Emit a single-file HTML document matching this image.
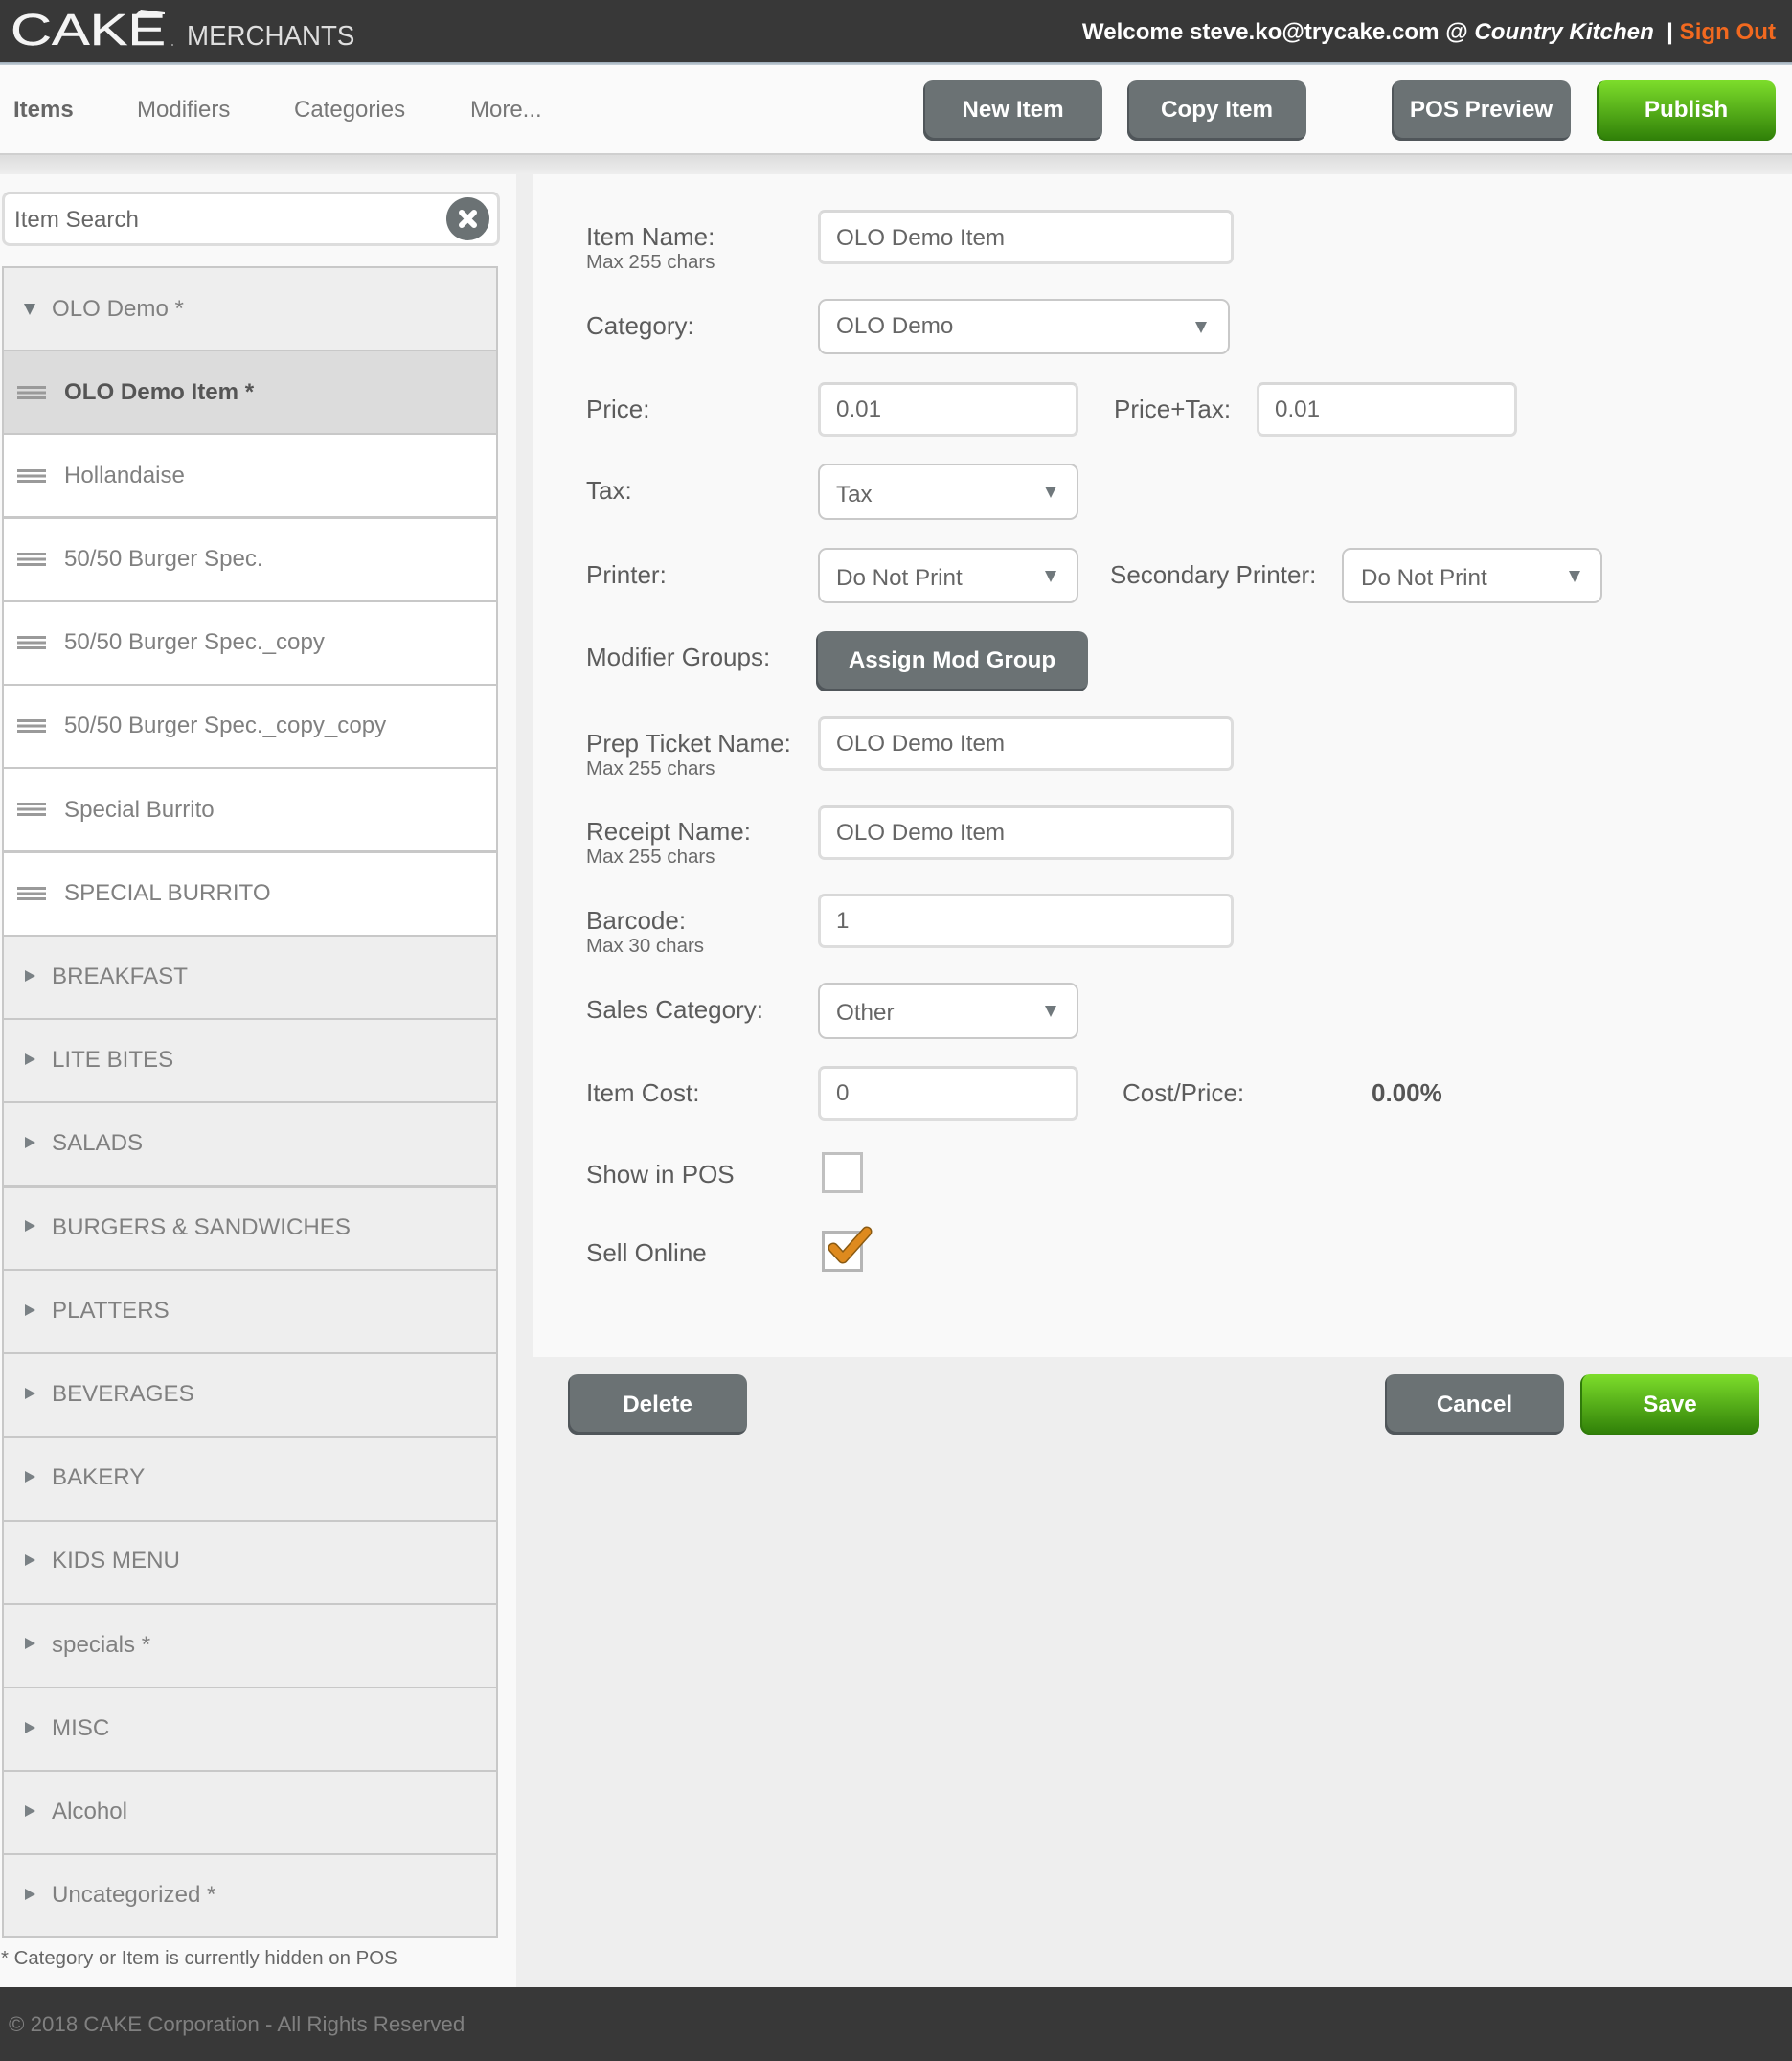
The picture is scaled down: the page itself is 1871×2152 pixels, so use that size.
<!DOCTYPE html>
<html><head><meta charset="utf-8"><title>CAKE Merchants</title>
<style>
html,body{margin:0;padding:0}
body{width:1871px;height:2152px;position:relative;overflow:hidden;background:#eee;font-family:"Liberation Sans",sans-serif;color:#666}
div,span.a{position:absolute;box-sizing:border-box}
.t{white-space:nowrap;height:32px;line-height:32px;font-size:24px}
.l{font-size:26px;color:#5c5c5c;left:612px}
.s{font-size:20.5px;color:#6a6a6a;left:612px;height:24px;line-height:24px;margin-top:1px}
.i{background:#fff;border:3px solid #ddd;border-top-color:#d8d8d8;border-radius:7px}
.sel{background:#fff;border:2px solid #c9c9c9;border-radius:9px}
.v{font-size:24.2px;color:#666;margin-top:1px}
.b{border-radius:10px;color:#fff;font-weight:bold;font-size:24.2px;text-align:center;background:#6b7274;box-shadow:inset 2px -3px 0 #50565a;line-height:62px;height:63px;width:187px}
.g{background:linear-gradient(#7ddd2b,#2f7f08);box-shadow:inset 2px -1px 0 #2f7a0a}
.r{left:2px;width:518px;height:89px;border:2px solid #c8c8c8;border-top-width:2px}
.c{background:#eee}.w{background:#fff}
.n{color:#808080;font-size:24.1px;margin-top:1px}
.tr{width:0;height:0;border-top:6.5px solid transparent;border-bottom:6.5px solid transparent;border-left:11px solid #7a8185;left:26px}
.td{width:0;height:0;border-left:6.5px solid transparent;border-right:6.5px solid transparent;border-top:12px solid #70787c;margin-top:1px}
.h{left:18px;width:30px;height:14px;background:repeating-linear-gradient(#9a9a9a 0,#9a9a9a 3px,transparent 3px,transparent 5.5px)}
</style></head><body>

<!-- header -->
<div style="left:0;top:0;width:1871px;height:65px;background:#383838"></div>
<div style="left:0;top:65px;width:1871px;height:3px;background:linear-gradient(#9aa9b6,#c8d2da)"></div>
<div class="t" style="left:11px;top:4px;height:54px;line-height:54px;font-size:46.5px;color:#f4f4f4;-webkit-text-stroke:.4px #f4f4f4;transform-origin:left center;transform:scaleX(1.28)">CAKE</div>
<svg style="position:absolute;left:0;top:0" width="200" height="60"><path d="M142 15L147 10L172 13V15Z" fill="#f2f2f2"/><rect x="179" y="46" width="2" height="2" fill="#8a8a8a"/></svg>
<div class="t" style="left:195px;top:21px;height:34px;line-height:34px;font-size:29px;color:#dedede;transform-origin:left center;transform:scaleX(.955)">MERCHANTS</div>
<div class="t" style="right:17px;top:18px;font-size:24.1px;font-weight:bold;color:#fff">Welcome steve.ko@trycake.com @ <i>Country Kitchen</i> &nbsp;| <span style="color:#f2691f">Sign Out</span></div>

<!-- nav -->
<div style="left:0;top:68px;width:1871px;height:94px;background:#fafafa;border-bottom:2px solid #cfcfcf"></div>
<div style="left:0;top:162px;width:1871px;height:20px;background:linear-gradient(#dcdcdc,#eee)"></div>
<div class="t" style="left:14px;top:99px;font-weight:bold;color:#666">Items</div>
<div class="t" style="left:143px;top:99px;color:#777">Modifiers</div>
<div class="t" style="left:307px;top:99px;color:#777">Categories</div>
<div class="t" style="left:491px;top:99px;color:#777">More...</div>
<div class="b" style="left:964px;top:84px">New Item</div>
<div class="b" style="left:1177px;top:84px">Copy Item</div>
<div class="b" style="left:1453px;top:84px">POS Preview</div>
<div class="b g" style="left:1667px;top:84px">Publish</div>

<!-- left panel -->
<div style="left:0;top:182px;width:539px;height:1893px;background:#f9f9f9"></div>
<div class="i" style="left:2px;top:200px;width:520px;height:57px;border-radius:8px"></div>
<div class="t" style="left:15px;top:214px;font-size:24.1px;color:#666">Item Search</div>
<div style="left:466px;top:206px;width:45px;height:45px;border-radius:50%;background:#6b7274"></div>
<svg style="position:absolute;left:466px;top:206px" width="45" height="45"><path d="M16 16L29 29M29 16L16 29" stroke="#fff" stroke-width="6" stroke-linecap="round"/></svg>

<div class="r c" style="top:278px"></div>
<div class="td" style="left:25px;top:316px"></div>
<div class="t n" style="left:54px;top:306px">OLO Demo *</div>
<div class="r" style="top:365px;background:#dcdcdc"></div>
<div class="h" style="top:403px"></div>
<div class="t" style="left:67px;top:394px;font-weight:bold;color:#555;font-size:24.1px">OLO Demo Item *</div>
<div class="r w" style="top:452px"></div><div class="h" style="top:490px"></div>
<div class="t n" style="left:67px;top:480px">Hollandaise</div>
<div class="r w" style="top:540px"></div><div class="h" style="top:577px"></div>
<div class="t n" style="left:67px;top:567px">50/50 Burger Spec.</div>
<div class="r w" style="top:627px"></div><div class="h" style="top:664px"></div>
<div class="t n" style="left:67px;top:654px">50/50 Burger Spec._copy</div>
<div class="r w" style="top:714px"></div><div class="h" style="top:751px"></div>
<div class="t n" style="left:67px;top:741px">50/50 Burger Spec._copy_copy</div>
<div class="r w" style="top:801px"></div><div class="h" style="top:838px"></div>
<div class="t n" style="left:67px;top:829px">Special Burrito</div>
<div class="r w" style="top:889px"></div><div class="h" style="top:926px"></div>
<div class="t n" style="left:67px;top:916px">SPECIAL BURRITO</div>
<div class="r c" style="top:976px"></div><div class="tr" style="top:1013px"></div>
<div class="t n" style="left:54px;top:1003px">BREAKFAST</div>
<div class="r c" style="top:1063px"></div><div class="tr" style="top:1100px"></div>
<div class="t n" style="left:54px;top:1090px">LITE BITES</div>
<div class="r c" style="top:1150px"></div><div class="tr" style="top:1187px"></div>
<div class="t n" style="left:54px;top:1177px">SALADS</div>
<div class="r c" style="top:1238px"></div><div class="tr" style="top:1274px"></div>
<div class="t n" style="left:54px;top:1265px">BURGERS &amp; SANDWICHES</div>
<div class="r c" style="top:1325px"></div><div class="tr" style="top:1362px"></div>
<div class="t n" style="left:54px;top:1352px">PLATTERS</div>
<div class="r c" style="top:1412px"></div><div class="tr" style="top:1449px"></div>
<div class="t n" style="left:54px;top:1439px">BEVERAGES</div>
<div class="r c" style="top:1500px"></div><div class="tr" style="top:1536px"></div>
<div class="t n" style="left:54px;top:1526px">BAKERY</div>
<div class="r c" style="top:1587px"></div><div class="tr" style="top:1623px"></div>
<div class="t n" style="left:54px;top:1613px">KIDS MENU</div>
<div class="r c" style="top:1674px"></div><div class="tr" style="top:1710px"></div>
<div class="t n" style="left:54px;top:1701px">specials *</div>
<div class="r c" style="top:1761px"></div><div class="tr" style="top:1798px"></div>
<div class="t n" style="left:54px;top:1788px">MISC</div>
<div class="r c" style="top:1848px"></div><div class="tr" style="top:1885px"></div>
<div class="t n" style="left:54px;top:1875px">Alcohol</div>
<div class="r c" style="top:1935px"></div><div class="tr" style="top:1972px"></div>
<div class="t n" style="left:54px;top:1962px">Uncategorized *</div>
<div class="t" style="left:1px;top:2029px;font-size:20.4px;color:#666">* Category or Item is currently hidden on POS</div>

<!-- main panel -->
<div style="left:557px;top:182px;width:1314px;height:1235px;background:#f9f9f9"></div>

<div class="t l" style="top:231px">Item Name:</div><div class="t s" style="top:261px">Max 255 chars</div>
<div class="i" style="left:854px;top:219px;width:434px;height:57px"></div>
<div class="t v" style="left:873px;top:232px">OLO Demo Item</div>

<div class="t l" style="top:324px">Category:</div>
<div class="sel" style="left:854px;top:312px;width:430px;height:58px"></div>
<div class="t v" style="left:873px;top:324px">OLO Demo</div>
<div class="td" style="left:1248px;top:335px"></div>

<div class="t l" style="top:411px">Price:</div>
<div class="i" style="left:854px;top:399px;width:272px;height:57px"></div>
<div class="t v" style="left:873px;top:411px">0.01</div>
<div class="t l" style="left:1163px;top:411px">Price+Tax:</div>
<div class="i" style="left:1312px;top:399px;width:272px;height:57px"></div>
<div class="t v" style="left:1331px;top:411px">0.01</div>

<div class="t l" style="top:496px">Tax:</div>
<div class="sel" style="left:854px;top:484px;width:272px;height:59px"></div>
<div class="t v" style="left:873px;top:500px">Tax</div>
<div class="td" style="left:1091px;top:507px"></div>

<div class="t l" style="top:584px">Printer:</div>
<div class="sel" style="left:854px;top:572px;width:272px;height:58px"></div>
<div class="t v" style="left:873px;top:587px">Do Not Print</div>
<div class="td" style="left:1091px;top:595px"></div>
<div class="t l" style="left:1159px;top:584px">Secondary Printer:</div>
<div class="sel" style="left:1401px;top:572px;width:272px;height:58px"></div>
<div class="t v" style="left:1421px;top:587px">Do Not Print</div>
<div class="td" style="left:1638px;top:595px"></div>

<div class="t l" style="top:670px">Modifier Groups:</div>
<div class="b" style="left:852px;top:659px;width:284px;line-height:61px">Assign Mod Group</div>

<div class="t l" style="top:760px">Prep Ticket Name:</div><div class="t s" style="top:790px">Max 255 chars</div>
<div class="i" style="left:854px;top:748px;width:434px;height:57px"></div>
<div class="t v" style="left:873px;top:760px">OLO Demo Item</div>

<div class="t l" style="top:852px">Receipt Name:</div><div class="t s" style="top:882px">Max 255 chars</div>
<div class="i" style="left:854px;top:841px;width:434px;height:57px"></div>
<div class="t v" style="left:873px;top:853px">OLO Demo Item</div>

<div class="t l" style="top:945px">Barcode:</div><div class="t s" style="top:975px">Max 30 chars</div>
<div class="i" style="left:854px;top:933px;width:434px;height:57px"></div>
<div class="t v" style="left:873px;top:945px">1</div>

<div class="t l" style="top:1038px">Sales Category:</div>
<div class="sel" style="left:854px;top:1026px;width:272px;height:59px"></div>
<div class="t v" style="left:873px;top:1041px">Other</div>
<div class="td" style="left:1091px;top:1049px"></div>

<div class="t l" style="top:1125px">Item Cost:</div>
<div class="i" style="left:854px;top:1113px;width:272px;height:57px"></div>
<div class="t v" style="left:873px;top:1125px">0</div>
<div class="t l" style="left:1172px;top:1125px">Cost/Price:</div>
<div class="t" style="left:1432px;top:1125px;font-size:26px;font-weight:bold;color:#555">0.00%</div>

<div class="t l" style="top:1210px">Show in POS</div>
<div style="left:858px;top:1203px;width:43px;height:43px;background:#fff;border:3px solid #c0c0c0"></div>

<div class="t l" style="top:1292px">Sell Online</div>
<div style="left:858px;top:1285px;width:43px;height:43px;background:#fff;border:3px solid #b5b5b5"></div>
<svg style="position:absolute;left:860px;top:1276px" width="56" height="48"><path d="M10 27L20 38L45 10" fill="none" stroke="#8a5a12" stroke-width="11" stroke-linecap="round" stroke-linejoin="round"/><path d="M10 27L20 38L45 10" fill="none" stroke="#de8a1e" stroke-width="8" stroke-linecap="round" stroke-linejoin="round"/></svg>

<div class="b" style="left:593px;top:1435px;line-height:63px">Delete</div>
<div class="b" style="left:1446px;top:1435px;line-height:63px">Cancel</div>
<div class="b g" style="left:1650px;top:1435px;line-height:63px">Save</div>

<!-- footer -->
<div style="left:0;top:2075px;width:1871px;height:77px;background:#383838"></div>
<div class="t" style="left:9px;top:2098px;font-size:22.3px;color:#808080">© 2018 CAKE Corporation - All Rights Reserved</div>
</body></html>
